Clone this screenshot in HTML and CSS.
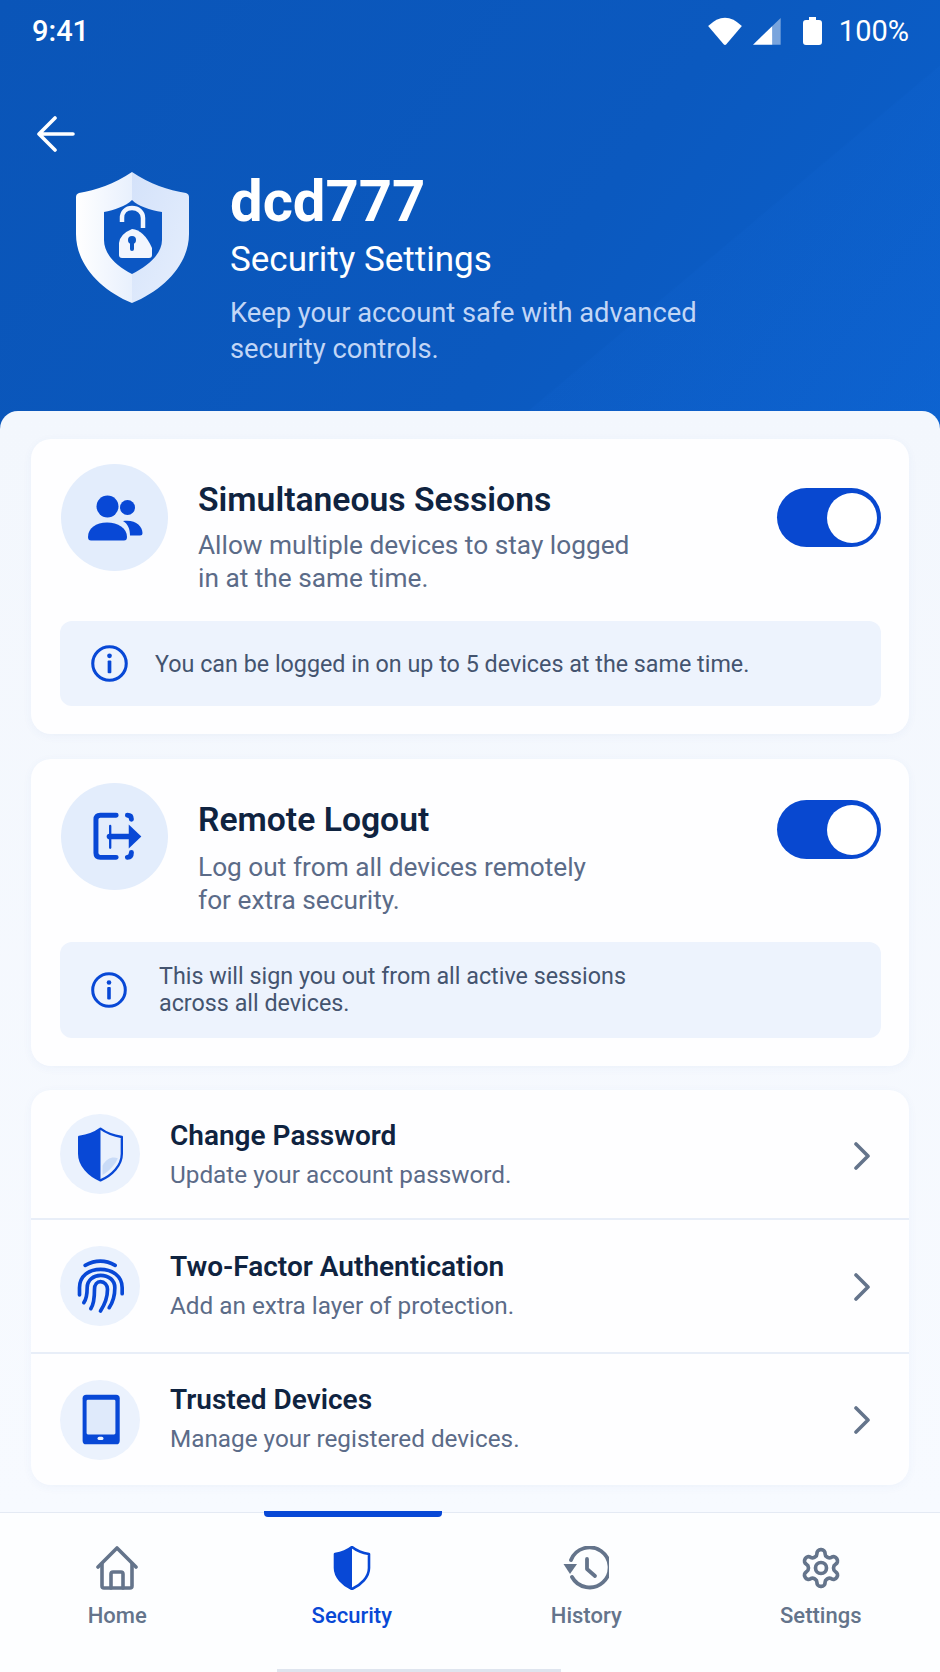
FILE: index.html
```html
<!DOCTYPE html>
<html lang="en">
<head>
    <meta charset="UTF-8">
    <meta name="viewport" content="width=device-width, initial-scale=1.0">
    <title>Security Settings</title>
    <link rel="stylesheet" href="styles.css">
</head>
<body>
<div class="page">
    <header class="header">
        <div class="status">
            <span>9:41</span>
            <div class="status-right">
                <svg class="st-wifi" width="34" height="28" viewBox="88 45 100 83"><path d="M88 72Q138 22 188 72L142 126Q138 130 134 126Z" fill="#fff"/></svg>
                <svg class="st-signal" width="28" height="28" viewBox="222 45 84 84"><path d="M222 128L280 72V128Z" fill="#fff"/><path d="M280 72L305 48V128H280Z" fill="#fff" opacity=".45"/></svg>
                <svg class="st-battery" width="19" height="28" viewBox="0 0 19 28"><path d="M6 0H13V3H16Q19 3 19 6V25Q19 28 16 28H3Q0 28 0 25V6Q0 3 3 3H6Z" fill="#fff"/></svg>
                <span class="st-pct">100%</span>
            </div>
        </div>
        <div class="back">
            <svg width="38" height="36" viewBox="0 0 38 36" fill="none" stroke="#fff" stroke-width="3.6" stroke-linecap="round" stroke-linejoin="round"><path d="M36 18H3M18 2L2 18L18 34"/></svg>
        </div>
        <div class="hero">
            <svg class="hero-shield" width="113" height="131" viewBox="0 0 113 131">
                <defs>
                    <linearGradient id="shL" x1="0" y1="0" x2="1" y2="0"><stop offset="0" stop-color="#fff"/><stop offset="1" stop-color="#e8f0fd"/></linearGradient>
                    <linearGradient id="shR" x1="0" y1="0" x2="1" y2="1"><stop offset="0" stop-color="#d4e2fa"/><stop offset="1" stop-color="#e6effd"/></linearGradient>
                </defs>
                <path d="M56 0C38 12 20 18 3 21Q0 22 0 25V62C0 92 24 118 56 131Z" fill="url(#shL)"/>
                <path d="M56 0C74 12 92 18 110 21Q113 22 113 25V62C113 92 88 118 56 131Z" fill="url(#shR)"/>
                <path d="M56 28C50 34 38 38 28 40V68C28 82 40 94 56 102C72 94 86 82 86 68V40C74 38 62 34 56 28Z" fill="#0b57c4"/>
                <path d="M46 50V46C46 40 50 36 56 36C62 36 67 40 67 46V56" fill="none" stroke="#f2f6fe" stroke-width="4.5"/>
                <path d="M43 79V71Q44 62 56 57Q68 58 76 76V83Q76 86 73 86H46Q43 86 43 83Z" fill="#f2f6fe"/>
                <circle cx="56" cy="68" r="4" fill="#0b57c4"/><rect x="54" y="69" width="4" height="10" rx="2" fill="#0b57c4"/>
            </svg>
            <div class="hero-text">
                <h1>dcd777</h1>
                <div class="hero-sub">Security Settings</div>
                <p class="hero-desc">Keep your account safe with advanced<br>security controls.</p>
            </div>
        </div>
    </header>

    <main class="sheet">
        <section class="card card-sessions">
            <div class="card-head">
                <div class="round-icon">
                    <svg width="56" height="46" viewBox="0 0 56 46" fill="#0848d6">
                        <circle cx="20.5" cy="11.5" r="11"/><circle cx="40.5" cy="12.5" r="7.5"/>
                        <path d="M1 42C1 33 9 27.5 20 27.5C31 27.5 40 33 40 42Q40 45.5 37 45.5H4Q1 45.5 1 42Z"/>
                        <path d="M36 26C48 24 55.5 31 55.5 38Q55.5 40.5 53 40.5H43C43 34 41 29 36 26Z"/>
                    </svg>
                </div>
                <div class="card-text">
                    <h2>Simultaneous Sessions</h2>
                    <p>Allow multiple devices to stay logged<br>in at the same time.</p>
                </div>
                <div class="toggle"><span class="knob"></span></div>
            </div>
            <div class="info">
                <svg class="info-icon" width="37" height="37" viewBox="0 0 36 36"><circle cx="18" cy="18" r="16.3" fill="none" stroke="#0848d6" stroke-width="3"/><circle cx="18" cy="10.5" r="2.3" fill="#0848d6"/><rect x="16.2" y="15" width="3.6" height="12.5" rx="1" fill="#0848d6"/></svg>
                <span>You can be logged in on up to 5 devices at the same time.</span>
            </div>
        </section>

        <section class="card card-logout">
            <div class="card-head">
                <div class="round-icon">
                    <svg width="55" height="55" viewBox="200 175 166 166" fill="none" stroke="#0848d6" stroke-width="15" stroke-linecap="round" stroke-linejoin="round">
                        <path d="M288 194H240Q227 194 227 207V308Q227 321 240 321H288"/>
                        <path d="M322 194Q334 194 334 206M334 306Q334 320 322 321"/>
                        <path d="M268 258H340" stroke-width="17"/>
                        <path d="M270 226V292" stroke-width="7"/>
                        <path d="M326 222L364 258L326 294Z" fill="#0848d6" stroke="none"/>
                    </svg>
                </div>
                <div class="card-text">
                    <h2>Remote Logout</h2>
                    <p>Log out from all devices remotely<br>for extra security.</p>
                </div>
                <div class="toggle"><span class="knob"></span></div>
            </div>
            <div class="info">
                <svg class="info-icon" width="36" height="36" viewBox="0 0 36 36"><circle cx="18" cy="18" r="16.3" fill="none" stroke="#0848d6" stroke-width="3"/><circle cx="18" cy="10.5" r="2.3" fill="#0848d6"/><rect x="16.2" y="15" width="3.6" height="12.5" rx="1" fill="#0848d6"/></svg>
                <span>This will sign you out from all active sessions<br>across all devices.</span>
            </div>
        </section>

        <section class="card list">
            <div class="row">
                <div class="row-icon">
                    <svg width="47" height="55" viewBox="170 110 140 165">
                        <path d="M240 115C260 130 285 137 304 140V190C304 225 275 255 240 270Z" fill="#eaf1fd"/>
                        <path d="M246 226C258 204 276 198 292 204C285 222 265 244 246 254Z" fill="#c9dbf7"/>
                        <path d="M240 115C260 130 285 137 304 140V190C304 225 275 255 240 270C205 255 176 225 176 190V140C195 137 220 130 240 115Z" fill="none" stroke="#0848d6" stroke-width="7" stroke-linejoin="round"/>
                        <path d="M240 115C220 130 195 137 176 140V190C176 225 205 255 240 270Z" fill="#0848d6"/>
                    </svg>
                </div>
                <div class="row-text"><h3>Change Password</h3><p>Update your account password.</p></div>
                <svg class="chev" width="18" height="28" viewBox="0 0 18 28" fill="none" stroke="#64748b" stroke-width="3.6" stroke-linecap="round" stroke-linejoin="round"><path d="M3 2L15 14L3 26"/></svg>
            </div>
            <div class="row">
                <div class="row-icon">
                    <svg width="47" height="60" viewBox="170 495 140 180" fill="none" stroke="#0848d6" stroke-width="11" stroke-linecap="round">
                        <path d="M194 523Q240 498 284 523"/>
                        <path d="M177 612V590C177 555 205 535 240 535C275 535 305 555 305 590V608"/>
                        <path d="M190 635C197 625 200 610 200 590C200 567 220 553 240 553C265 553 283 568 283 590C283 612 278 632 266 650"/>
                        <path d="M211 653C220 640 222 620 222 595C222 580 230 572 240 572C252 572 261 582 261 595C261 620 252 642 240 660"/>
                    </svg>
                </div>
                <div class="row-text"><h3>Two-Factor Authentication</h3><p>Add an extra layer of protection.</p></div>
                <svg class="chev" width="18" height="28" viewBox="0 0 18 28" fill="none" stroke="#64748b" stroke-width="3.6" stroke-linecap="round" stroke-linejoin="round"><path d="M3 2L15 14L3 26"/></svg>
            </div>
            <div class="row">
                <div class="row-icon">
                    <svg width="47" height="53" viewBox="170 905 140 160">
                        <rect x="186" y="910" width="112" height="150" rx="11" fill="#0848d6"/>
                        <rect x="198" y="925" width="87" height="105" rx="4" fill="#dfeafb"/>
                        <rect x="231" y="1037" width="18" height="10" rx="5" fill="#eef4fe"/>
                    </svg>
                </div>
                <div class="row-text"><h3>Trusted Devices</h3><p>Manage your registered devices.</p></div>
                <svg class="chev" width="18" height="28" viewBox="0 0 18 28" fill="none" stroke="#64748b" stroke-width="3.6" stroke-linecap="round" stroke-linejoin="round"><path d="M3 2L15 14L3 26"/></svg>
            </div>
        </section>
    </main>

    <nav class="nav">
        <div class="tab">
            <svg width="44" height="44" viewBox="0 0 44 44" fill="none" stroke="#64748b" stroke-width="3.6" stroke-linecap="round" stroke-linejoin="round">
                <path d="M3 21L22 2L41 21"/>
                <path d="M7 18V40Q7 42 9 42H35Q37 42 37 40V18"/>
                <path d="M16 42V28Q16 26 18 26H26Q28 26 28 28V42"/>
            </svg>
            <span>Home</span>
        </div>
        <div class="tab active">
            <svg width="44" height="44" viewBox="0 0 44 44">
                <path d="M22 1C27 5 33 7 39 8V22C39 31 31 39 22 43Z" fill="#fff"/>
                <path d="M22 1C27 5 33 7 39 8V22C39 31 31 39 22 43C13 39 5 31 5 22V8C11 7 17 5 22 1Z" fill="none" stroke="#0848d6" stroke-width="2.6" stroke-linejoin="round"/>
                <path d="M22 1C17 5 11 7 5 8V22C5 31 13 39 22 43Z" fill="#0848d6"/>
            </svg>
            <span>Security</span>
        </div>
        <div class="tab">
            <svg width="46" height="44" viewBox="0 0 46 44" fill="none" stroke="#64748b" stroke-width="3.8" stroke-linecap="round" stroke-linejoin="round">
                <path d="M8 14A20 20 0 1 1 9 31"/>
                <path d="M24 13V23L32 30"/>
                <path d="M0.5 18H14L7 28Z" fill="#64748b" stroke="none"/>
            </svg>
            <span>History</span>
        </div>
        <div class="tab">
            <svg width="44" height="44" viewBox="0 0 24 24" fill="none" stroke="#64748b" stroke-width="2" stroke-linecap="round" stroke-linejoin="round">
                <path d="M12.22 2h-.44a2 2 0 0 0-2 2v.18a2 2 0 0 1-1 1.73l-.43.25a2 2 0 0 1-2 0l-.15-.08a2 2 0 0 0-2.73.73l-.22.38a2 2 0 0 0 .73 2.73l.15.1a2 2 0 0 1 1 1.72v.51a2 2 0 0 1-1 1.74l-.15.09a2 2 0 0 0-.73 2.73l.22.38a2 2 0 0 0 2.73.73l.15-.08a2 2 0 0 1 2 0l.43.25a2 2 0 0 1 1 1.73V20a2 2 0 0 0 2 2h.44a2 2 0 0 0 2-2v-.18a2 2 0 0 1 1-1.73l.43-.25a2 2 0 0 1 2 0l.15.08a2 2 0 0 0 2.73-.73l.22-.39a2 2 0 0 0-.73-2.73l-.15-.08a2 2 0 0 1-1-1.74v-.5a2 2 0 0 1 1-1.74l.15-.09a2 2 0 0 0 .73-2.73l-.22-.38a2 2 0 0 0-2.73-.73l-.15.08a2 2 0 0 1-2 0l-.43-.25a2 2 0 0 1-1-1.73V4a2 2 0 0 0-2-2z"/>
                <circle cx="12" cy="12" r="3"/>
            </svg>
            <span>Settings</span>
        </div>
        <div class="home-bar"></div>
    </nav>
</div>
</body>
</html>
```

FILE: styles.css
```css
* { box-sizing: border-box; }
html, body { margin: 0; padding: 0; }
body { font-family: Roboto, "Liberation Sans", sans-serif; background-color: #f4f8fe; }
h1, h2, h3, p { margin: 0; font-weight: normal; }

.page { width: 940px; height: 1672px; display: flex; flex-direction: column; overflow: hidden; }

/* header */
.header {
    height: 430px;
    flex: none;
    color: #fff;
    background:
        linear-gradient(140deg, rgba(255,255,255,0) 70%, rgba(30,120,240,.07) 70.2%, rgba(30,120,240,.12) 100%),
        linear-gradient(125deg, #0a55b8 0%, #0b59bf 60%, #0b60cc 100%);
}
.status { display: flex; justify-content: space-between; align-items: center; height: 62px; padding: 0 31px 0 32px; font-size: 29px; font-weight: 500; }
.status-right { display: flex; align-items: center; }
.st-signal { margin-left: 11px; }
.st-battery { margin-left: 22px; }
.st-pct { margin-left: 17px; font-weight: 400; font-size: 29px; }
.back { height: 36px; margin: 54px 0 0 37px; }
.hero { display: flex; gap: 41px; margin: 20px 0 0 76px; }
.hero-shield { flex: none; }
.hero-text { padding-top: 1px; }
.hero-text h1 { font-size: 58px; line-height: 56px; font-weight: 700; }
.hero-sub { font-size: 35px; line-height: 40px; margin-top: 11px; }
.hero-desc { font-size: 27.3px; line-height: 36px; margin-top: 15px; color: #c2d6f6; }

/* sheet + cards */
.sheet { flex: 1; margin-top: -19px; padding: 28px 31px 0; border-radius: 18px 18px 0 0; background: linear-gradient(#f3f7fd, #f7faff); }
.card { background-color: #fefeff; border-radius: 20px; padding: 25px 28px 28px 29px; box-shadow: 0 2px 10px rgba(60,100,180,.05); }
.card-head { display: flex; align-items: flex-start; }
.round-icon { width: 107px; height: 107px; flex: none; margin-left: 1px; border-radius: 50%; background-color: #e3edfc; display: flex; align-items: center; justify-content: center; }
.card-text { flex: 1; margin-left: 30px; padding-top: 16px; }
.card-text h2 { font-size: 33.7px; line-height: 40px; font-weight: 600; color: #0f2340; }
.card-text p { font-size: 26.25px; line-height: 33px; margin-top: 9px; color: #5b6b88; }
.toggle { width: 104px; height: 59px; flex: none; margin-top: 24px; border-radius: 30px; background-color: #0848d0; display: flex; justify-content: flex-end; align-items: center; padding-right: 4px; }
.knob { width: 50px; height: 50px; border-radius: 50%; background-color: #fff; }
.info { display: flex; align-items: center; height: 85px; margin-top: 26px; padding-left: 31px; border-radius: 12px; background-color: #edf3fd; font-size: 23.3px; color: #44546f; }
.info span { margin-left: 27px; }

.card-logout { margin-top: 25px; padding-top: 24px; }
.card-logout .toggle { margin-top: 17px; }
.card-logout .card-text { padding-top: 17px; }
.card-logout .card-text p { margin-top: 11px; }
.card-logout .info { height: 96px; margin-top: 25px; line-height: 27.5px; }
.card-logout .info span { margin-left: 32px; }

/* list */
.list { display: grid; grid-template-rows: 128px 134px 133px; margin-top: 24px; padding: 0; }
.row { display: flex; align-items: center; padding: 0 36px 0 29px; border-top: 2px solid #e8eef8; }
.row:first-child { border-top: 0; }
.row-icon { width: 80px; height: 80px; flex: none; border-radius: 50%; background-color: #ebf2fd; display: flex; align-items: center; justify-content: center; }
.row-text { flex: 1; margin-left: 30px; }
.row + .row .row-text { margin-bottom: 3px; }
.row-text h3 { font-size: 28px; line-height: 36px; font-weight: 600; color: #0f2340; }
.row-text p { font-size: 24.3px; line-height: 30px; margin-top: 6px; color: #5b6b88; }
.chev { flex: none; margin: 3px 2px 0 0; }
.row + .row .chev { margin-top: 1px; }

/* bottom nav */
.nav { position: relative; flex: none; height: 160px; display: grid; grid-template-columns: repeat(4, 1fr); padding-right: 2px; background-color: #fdfeff; border-top: 1px solid #e4eaf4; }
.tab { position: relative; display: flex; flex-direction: column; align-items: center; padding-top: 33px; font-size: 22px; font-weight: 500; color: #64748b; }
.tab span { margin-top: 13px; }
.tab.active { color: #0848d6; }
.tab.active::before { content: ""; position: absolute; top: -2px; left: 29.5px; width: 178px; height: 6px; border-radius: 0 0 4px 4px; background-color: #0848d6; }
.home-bar { position: absolute; left: 277px; bottom: 0; width: 284px; height: 3px; background-color: #dfe5ef; }
```
